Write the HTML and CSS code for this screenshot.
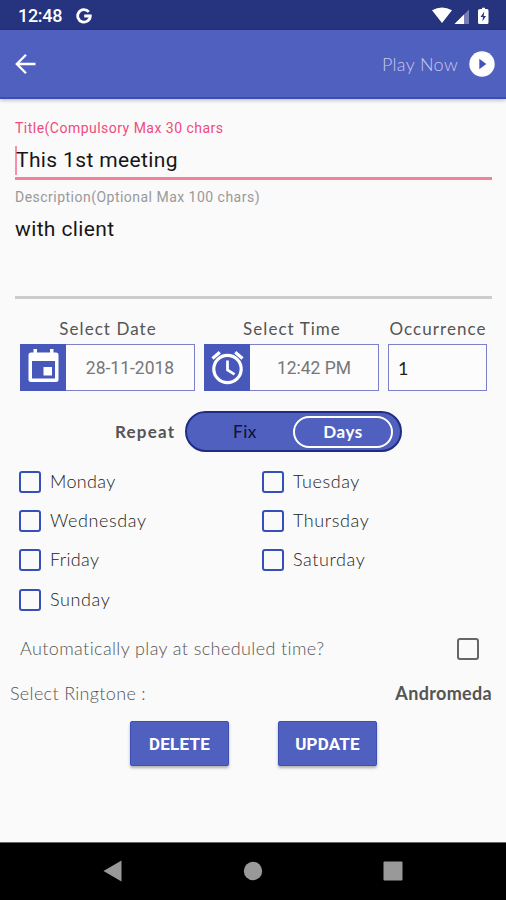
FILE: index.html
```html
<!DOCTYPE html>
<html lang="en">
<head>
<meta charset="utf-8">
<title>Edit reminder</title>
<link rel="stylesheet" href="styles.css">
</head>
<body>
<div class="status">
  <span class="clock">12:48</span>
  <svg class="google" width="16" height="16" viewBox="0 0 16 16"><path d="M12.8 3.8A6.3 6.3 0 1 0 14.3 8H8.2" fill="none" stroke="#fff" stroke-width="2.800"/></svg>
  <svg class="signals" width="60" height="18" viewBox="0 0 60 18"><path d="M0 3.3Q10 -2.5 20 3.3L10 16Z" fill="#fff"/><path d="M22.500 17L37 2.500V17Z" fill="#7780b5"/><path d="M22.500 17L32 7.500V17Z" fill="#fff"/><path d="M48 2H50V.7H53V2H55Q56.500 2 56.500 3.500V15.500Q56.500 17 55 17H47.500Q46 17 46 15.500V3.500Q46 2 48 2Z" fill="#fff"/><path d="M52.300 4.500L48.500 10H51L50.300 14.500L54 9H51.600Z" fill="#26337f"/></svg>
</div>
<header class="appbar">
  <svg width="22" height="22" viewBox="0 0 22 22"><path d="M20.500 11H2M11 1.800L1.800 11L11 20.200" fill="none" stroke="#fff" stroke-width="2.300"/></svg>
  <span class="play">Play Now</span>
  <svg width="26" height="26" viewBox="0 0 26 26"><circle cx="13" cy="13" r="12.700" fill="#fff"/><path d="M10.300 7.700L17.300 13L10.300 18.300Z" fill="#4353b5"/></svg>
</header>
<main>
  <div class="field title-field">
    <label>Title(Compulsory Max 30 chars</label>
    <div class="value"><i class="caret"></i><span>This 1st meeting</span></div>
  </div>
  <div class="field desc-field">
    <label>Description(Optional Max 100 chars)</label>
    <div class="value"><span>with client</span></div>
  </div>
  <div class="pickers">
    <div class="picker">
      <span class="caption">Select Date</span>
      <div class="box"><span class="tile"><svg width="46" height="46" viewBox="0 0 46 46"><path fill-rule="evenodd" d="M11 8.500H13.500V5H17V8.500H30V5H33.500V8.500H36Q38.500 8.500 38.500 11V35.500Q38.500 38 36 38H11Q8.500 38 8.500 35.500V11Q8.500 8.500 11 8.500ZM12 17V34.500H35V17Z" fill="#fff"/><path d="M23.500 23H32V31.500H23.500Z" fill="#fff"/></svg></span><span class="data">28-11-2018</span></div>
    </div>
    <div class="picker">
      <span class="caption">Select Time</span>
      <div class="box"><span class="tile"><svg width="46" height="46" viewBox="0 0 46 46"><circle cx="23.500" cy="25" r="13.700" fill="none" stroke="#fff" stroke-width="3.200"/><path d="M23.500 16.500V26L30.500 30.300" fill="none" stroke="#fff" stroke-width="2.700"/><path d="M8.500 14.500L15.800 8.200M31.200 8.200L38.500 14.500" stroke="#fff" stroke-width="3.200"/></svg></span><span class="data">12:42 PM</span></div>
    </div>
    <div class="picker">
      <span class="caption">Occurrence</span>
      <div class="box count">1</div>
    </div>
  </div>
  <div class="repeat">
    <span class="repeat-label">Repeat</span>
    <div class="toggle"><span class="fix">Fix</span><span class="days">Days</span></div>
  </div>
  <div class="week">
    <div class="day"><i class="check"></i><span class="snug">Monday</span></div>
    <div class="day"><i class="check"></i><span>Tuesday</span></div>
    <div class="day"><i class="check"></i><span>Wednesday</span></div>
    <div class="day"><i class="check"></i><span>Thursday</span></div>
    <div class="day"><i class="check"></i><span class="snug">Friday</span></div>
    <div class="day"><i class="check"></i><span>Saturday</span></div>
    <div class="day"><i class="check"></i><span>Sunday</span></div>
  </div>
  <div class="auto"><span>Automatically play at scheduled time?</span><i class="check gray"></i></div>
  <div class="ringtone"><span>Select Ringtone :</span><b>Andromeda</b></div>
  <div class="actions"><button>DELETE</button><button>UPDATE</button></div>
</main>
<nav>
  <svg width="20" height="22" viewBox="0 0 20 22"><path d="M.5 11L18.500 .5V21.500Z" fill="#999"/></svg>
  <svg width="20" height="20" viewBox="0 0 20 20"><circle cx="10" cy="10" r="9.200" fill="#999"/></svg>
  <svg width="20" height="20" viewBox="0 0 20 20"><rect x=".5" y=".5" width="19" height="19" rx="1" fill="#999"/></svg>
</nav>
</body>
</html>
```
FILE: styles.css
```css
* { box-sizing: border-box; }
body { margin: 0; width: 506px; height: 900px; display: flex; flex-direction: column; background: #fafafa; font-family: Roboto, sans-serif; overflow: hidden; }
span, b, label { white-space: nowrap; }
svg { display: block; flex: none; }
.status { height: 30px; background: #26337f; display: flex; align-items: center; padding: 1px 14px 0 18px; color: #fff; }
.clock { font-size: 18px; font-weight: 500; width: 44px; letter-spacing: -.3px; }
.google { margin-left: 14px; }
.signals { margin-left: auto; }
.appbar { height: 69px; background: #5060bf; border-bottom: 2px solid #3c4db3; box-shadow: 0 1px 4px rgba(0,0,0,.3); display: flex; align-items: center; padding: 0 11px 0 15px; }
.play { margin-left: auto; margin-right: 11px; font: 300 18px Lato, sans-serif; letter-spacing: .35px; color: #c3c9ed; }
main { flex: 1; display: flex; flex-direction: column; }
.field { margin: 0 14px 0 15px; display: flex; flex-direction: column; }
.field label { font-size: 14px; line-height: 20px; letter-spacing: .48px; }
.field .value { display: flex; align-items: center; height: 30px; font-size: 21px; letter-spacing: .37px; color: #161616; margin-top: 7px; }
.title-field { padding-top: 19px; height: 81px; border-bottom: 3px solid #f5809d; }
.title-field label { color: #f04a7e; }
.title-field .value { margin-top: 7px; }
.caret { width: 2px; height: 29px; background: #f78fac; margin-right: -1px; }
.desc-field { padding-top: 7px; height: 119px; border-bottom: 3px solid #ccc; }
.desc-field label { color: #999; }
.pickers { display: grid; grid-template-columns: 175px 175px 99px; gap: 9px; padding: 19px 0 0 20px; }
.picker { display: flex; flex-direction: column; align-items: center; }
.caption { font: 400 17px/22px Lato, sans-serif; letter-spacing: 1.050px; color: #555; margin: 0 -1px 4px 0; }
.box { align-self: stretch; height: 47px; border: 1px solid #7c80c9; display: flex; align-items: center; background: #fcfcfd; }
.tile { width: 46px; height: 47px; margin: -1px 0 -1px -1px; background: #4758ba; flex: none; }
.data { flex: 1; text-align: center; font-size: 17.500px; color: #777; }
.count { font: 18px Lato, sans-serif; color: #222; padding-left: 9px; }
.repeat { display: flex; align-items: center; height: 41px; margin-top: 20px; padding-left: 115px; }
.repeat-label { width: 70px; font: bold 17px Lato, sans-serif; letter-spacing: 1.200px; color: #555; }
.toggle { width: 217px; height: 41px; border: 2px solid #202c82; border-radius: 21px; background: #5060bf; display: flex; align-items: center; padding: 0 7px 0 0; font: 17px Lato, sans-serif; }
.fix { flex: 1; text-align: center; padding-left: 10px; letter-spacing: .6px; color: #111739; font-weight: 500; }
.days { width: 100px; height: 32px; border: 2px solid #fff; border-radius: 16px; display: flex; align-items: center; justify-content: center; color: #fff; font-weight: bold; letter-spacing: .5px; }
.week { display: grid; grid-template-columns: 243px 1fr; grid-auto-rows: 39.330px; padding: 10px 0 0 19px; color: #222; font: 300 18px Lato, sans-serif; letter-spacing: .6px; }
.day { display: flex; align-items: center; gap: 9px; }
.day span { padding-bottom: 2px; }
.snug { letter-spacing: .35px; }
.check { width: 22px; height: 22px; border: 2px solid #3550b9; border-radius: 3px; flex: none; }
.gray { border-color: #666; }
.auto { display: flex; align-items: center; justify-content: space-between; height: 44px; margin-top: 8px; padding: 0 27px 0 20px; font: 300 18px Lato, sans-serif; letter-spacing: .39px; color: #555; }
.auto span { padding-bottom: 2px; }
.ringtone { display: flex; align-items: center; justify-content: space-between; height: 44px; padding: 0 14px 0 10px; font: 300 18px Lato, sans-serif; letter-spacing: .33px; color: #555; }
.ringtone b { font-weight: bold; color: #555; }
.actions { display: flex; gap: 49px; padding: 6px 0 0 130px; }
button { width: 99px; height: 45px; padding: 0; border: 1px solid #3e50b4; border-radius: 2px; background: #5060bf; color: #fff; font: bold 17px Roboto, sans-serif; letter-spacing: .2px; box-shadow: 0 2px 3px rgba(0,0,0,.3); }
nav { height: 58px; background: #000; border-top: 1px solid #666; display: flex; align-items: center; justify-content: space-between; padding: 0 103px 2px; }
```
